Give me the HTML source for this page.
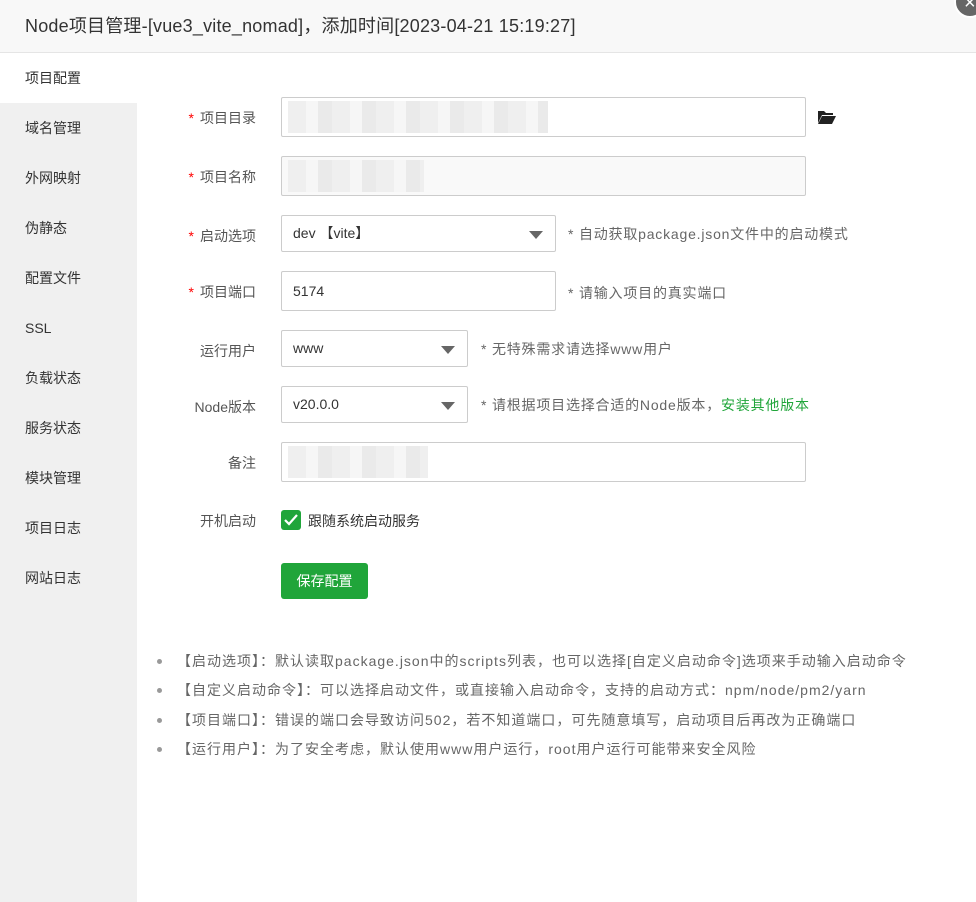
<!DOCTYPE html>
<html><head><meta charset="utf-8"><style>
*{box-sizing:border-box;margin:0;padding:0}
body{width:976px;height:902px;background:#fff;font-family:"Liberation Sans","Noto Sans CJK SC",sans-serif;font-size:14px;color:#333;position:relative;overflow:hidden}
.title{position:absolute;left:0;top:0;width:976px;height:53px;background:#f8f8f8;border-bottom:1px solid #e5e5e5;font-size:18px;line-height:53px;padding-left:25px;color:#333;letter-spacing:0.2px}
.close{position:absolute;left:954px;top:-14px;width:32px;height:32px;border-radius:50%;background:#666;border:2px solid #fff}
.close:after{content:"×";position:absolute;left:8px;top:4px;color:#fff;font-size:20px}
.side{position:absolute;left:0;top:53px;width:137px;height:849px;background:#f0f0f0}
.side div{height:50px;line-height:50px;padding-left:25px;color:#333}
.side div.act{background:#fff}
.lab{position:absolute;width:120px;text-align:right;left:136px;color:#555}
.lab b{color:#f00;font-weight:normal;margin-right:6px}
.in{position:absolute;left:281px;border:1px solid #ccc;border-radius:2px;background:#fff;padding-left:11px;color:#333}
.sel:after{content:"";position:absolute;right:12px;top:15px;border-left:7px solid transparent;border-right:7px solid transparent;border-top:8px solid #666}
.tip{position:absolute;color:#666;letter-spacing:0.8px}
.blur{position:absolute;background:repeating-linear-gradient(90deg,#efefef 0 18px,#f6f6f6 18px 30px,#eaeaea 30px 44px)}
.cb{position:absolute;left:281px;top:510px;width:20px;height:20px;background:#20a53a;border-radius:3px}
.btn{position:absolute;left:281px;top:563px;width:87px;height:36px;background:#20a53a;border-radius:3px;color:#fff;line-height:36px;text-align:center}
ul{position:absolute;left:177px;top:649px;list-style:none;color:#666;letter-spacing:1px;white-space:nowrap}
li{height:29.3px;line-height:24px;position:relative}
li:before{content:"";position:absolute;left:-20px;top:10px;width:5px;height:5px;border-radius:50%;background:#999}
</style></head><body>
<div class="title">Node项目管理-[vue3_vite_nomad]，添加时间[2023-04-21 15:19:27]</div>
<div class="close"></div>
<div class="side" style="top:53px">
<div class="act">项目配置</div><div>域名管理</div><div>外网映射</div><div>伪静态</div><div>配置文件</div><div>SSL</div><div>负载状态</div><div>服务状态</div><div>模块管理</div><div>项目日志</div><div>网站日志</div>
</div>

<div class="lab" style="top:108px"><b>*</b>项目目录</div>
<div class="in" style="top:97px;width:525px;height:40px"></div>
<div class="blur" style="left:288px;top:101px;width:260px;height:32px"></div>
<svg style="position:absolute;left:818px;top:110px" width="18" height="14" viewBox="0 0 18 14"><path d="M0 1h6l2 2h7v2H4L0 13z" fill="#222"/><path d="M4 6h14l-4 8H0z" fill="#222"/></svg>

<div class="lab" style="top:167px"><b>*</b>项目名称</div>
<div class="in" style="top:156px;width:525px;height:40px;background:#f9f9f9"></div>
<div class="blur" style="left:288px;top:160px;width:136px;height:32px"></div>

<div class="lab" style="top:226px"><b>*</b>启动选项</div>
<div class="in sel" style="top:215px;width:275px;height:37px;line-height:35px">dev 【vite】</div>
<div class="tip" style="left:568px;top:224px">* 自动获取package.json文件中的启动模式</div>

<div class="lab" style="top:282px"><b>*</b>项目端口</div>
<div class="in" style="top:271px;width:275px;height:40px;line-height:38px">5174</div>
<div class="tip" style="left:568px;top:283px">* 请输入项目的真实端口</div>

<div class="lab" style="top:341px">运行用户</div>
<div class="in sel" style="top:330px;width:187px;height:37px;line-height:35px">www</div>
<div class="tip" style="left:481px;top:339px">* 无特殊需求请选择www用户</div>

<div class="lab" style="top:397px">Node版本</div>
<div class="in sel" style="top:386px;width:187px;height:37px;line-height:35px">v20.0.0</div>
<div class="tip" style="left:481px;top:395px">* 请根据项目选择合适的Node版本，<span style="color:#20a53a">安装其他版本</span></div>

<div class="lab" style="top:453px">备注</div>
<div class="in" style="top:442px;width:525px;height:40px"></div>
<div class="blur" style="left:288px;top:446px;width:140px;height:32px"></div>

<div class="lab" style="top:511px">开机启动</div>
<div class="cb"><svg width="20" height="20"><path d="M4 10l4 4 8-9" stroke="#fff" stroke-width="2.2" fill="none"/></svg></div>
<div style="position:absolute;left:308px;top:511px;color:#333">跟随系统启动服务</div>
<div class="btn">保存配置</div>

<ul>
<li>【启动选项】：默认读取package.json中的scripts列表，也可以选择[自定义启动命令]选项来手动输入启动命令</li>
<li>【自定义启动命令】：可以选择启动文件，或直接输入启动命令，支持的启动方式：npm/node/pm2/yarn</li>
<li>【项目端口】：错误的端口会导致访问502，若不知道端口，可先随意填写，启动项目后再改为正确端口</li>
<li>【运行用户】：为了安全考虑，默认使用www用户运行，root用户运行可能带来安全风险</li>
</ul>
</body></html>
